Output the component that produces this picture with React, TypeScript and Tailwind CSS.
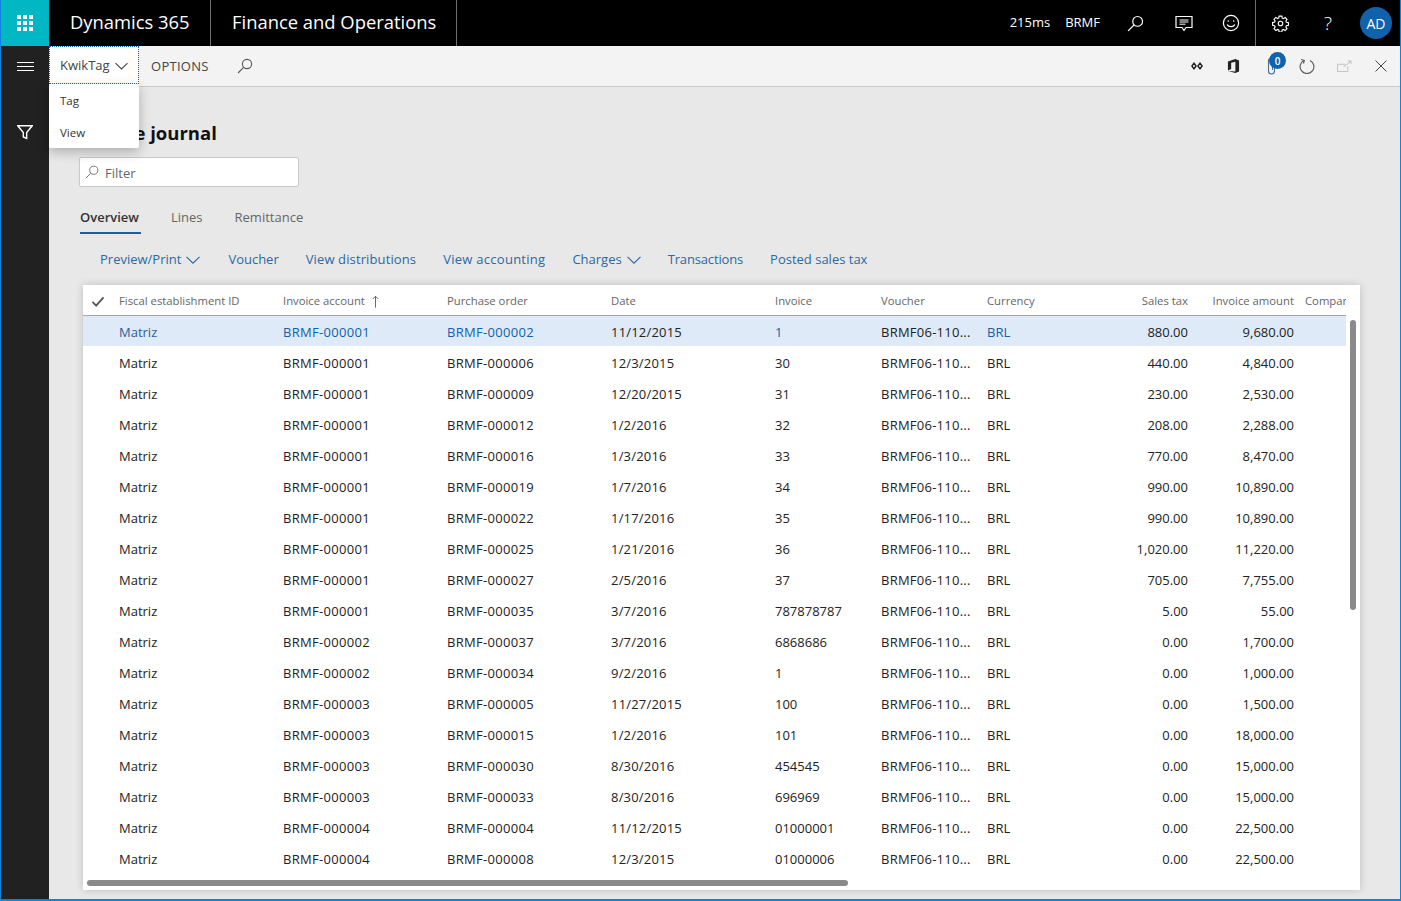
import React from "react";

const FONT = "font-['Open_Sans','Noto_Sans',sans-serif]";

const rows: [string, string, string, string, string, string][] = [
  ["BRMF-000001", "BRMF-000002", "11/12/2015", "1", "880.00", "9,680.00"],
  ["BRMF-000001", "BRMF-000006", "12/3/2015", "30", "440.00", "4,840.00"],
  ["BRMF-000001", "BRMF-000009", "12/20/2015", "31", "230.00", "2,530.00"],
  ["BRMF-000001", "BRMF-000012", "1/2/2016", "32", "208.00", "2,288.00"],
  ["BRMF-000001", "BRMF-000016", "1/3/2016", "33", "770.00", "8,470.00"],
  ["BRMF-000001", "BRMF-000019", "1/7/2016", "34", "990.00", "10,890.00"],
  ["BRMF-000001", "BRMF-000022", "1/17/2016", "35", "990.00", "10,890.00"],
  ["BRMF-000001", "BRMF-000025", "1/21/2016", "36", "1,020.00", "11,220.00"],
  ["BRMF-000001", "BRMF-000027", "2/5/2016", "37", "705.00", "7,755.00"],
  ["BRMF-000001", "BRMF-000035", "3/7/2016", "787878787", "5.00", "55.00"],
  ["BRMF-000002", "BRMF-000037", "3/7/2016", "6868686", "0.00", "1,700.00"],
  ["BRMF-000002", "BRMF-000034", "9/2/2016", "1", "0.00", "1,000.00"],
  ["BRMF-000003", "BRMF-000005", "11/27/2015", "100", "0.00", "1,500.00"],
  ["BRMF-000003", "BRMF-000015", "1/2/2016", "101", "0.00", "18,000.00"],
  ["BRMF-000003", "BRMF-000030", "8/30/2016", "454545", "0.00", "15,000.00"],
  ["BRMF-000003", "BRMF-000033", "8/30/2016", "696969", "0.00", "15,000.00"],
  ["BRMF-000004", "BRMF-000004", "11/12/2015", "01000001", "0.00", "22,500.00"],
  ["BRMF-000004", "BRMF-000008", "12/3/2015", "01000006", "0.00", "22,500.00"],
];

const GRID = "grid grid-cols-[36px_164px_164px_164px_164px_106px_106px_101px_100px_106px_52px]";

function Search({ className, color = "currentColor" }: { className?: string; color?: string }) {
  return (
    <svg viewBox="0 0 16 16" className={className} fill="none" stroke={color} strokeWidth="1.1">
      <circle cx="10" cy="6" r="4.6" />
      <path d="M6.6 9.4 1 15" />
    </svg>
  );
}

function Chevron({ className }: { className?: string }) {
  return (
    <svg viewBox="0 0 14 8" className={className} fill="none" stroke="currentColor" strokeWidth="1.1">
      <path d="M.5.8 7 7.2 13.5.8" />
    </svg>
  );
}

function TopBar() {
  return (
    <header className="flex h-[46px] shrink-0 items-center bg-black text-white">
      <div className="flex h-full w-[48px] items-center justify-center bg-[#00b7c3]">
        <div className="grid grid-cols-3 gap-[1.500px]">
          {Array.from({ length: 9 }).map((_, i) => (
            <span key={i} className="h-[4.500px] w-[4.500px] bg-white" />
          ))}
        </div>
      </div>
      <div className="flex h-full w-[162px] items-center border-r border-[#6f6f6f] pb-[2px] pl-[21px] text-[18.400px] leading-none">
        Dynamics 365
      </div>
      <div className="flex h-full w-[246px] items-center border-r border-[#6f6f6f] pb-[2px] pl-[21px] text-[18.400px] leading-none">
        Finance and Operations
      </div>
      <div className="flex h-full flex-1 items-center justify-end">
        <span className="mr-[15px] text-[13px]">215ms</span>
        <span className="mr-[27px] text-[13px]">BRMF</span>
        <Search className="mr-[31px] h-[17px] w-[17px]" color="#fff" />
        <svg viewBox="0 0 18 18" className="mr-[29px] h-[18px] w-[18px]" fill="none" stroke="#fff" strokeWidth="1.2">
          <path d="M1 2.5h16v11h-6l-2 3-2-3H1z" />
          <path d="M4.5 6h9M4.5 8h9M4.5 10.200h6" strokeWidth="1" />
        </svg>
        <svg viewBox="0 0 18 18" className="mr-[15px] h-[18px] w-[18px]" fill="none" stroke="#fff" strokeWidth="1.2">
          <circle cx="9" cy="9" r="7.6" />
          <circle cx="6.300" cy="7" r=".8" fill="#fff" stroke="none" />
          <circle cx="11.700" cy="7" r=".8" fill="#fff" stroke="none" />
          <path d="M5.200 10.500c1 2.700 6.600 2.700 7.600 0" />
        </svg>
      </div>
      <div className="flex h-full w-[145px] items-center border-l border-[#6f6f6f]">
        <svg viewBox="0 0 18 18" className="ml-[16px] h-[17px] w-[17px]" fill="none" stroke="#fff" strokeWidth="1.2">
          <circle cx="9" cy="9" r="2.400" />
          <path d="M7.600 1.200h2.800l.4 2.100 1.300.6 1.800-1.200 2 2-1.200 1.800.6 1.300 2.100.4v2.800l-2.100.4-.6 1.300 1.200 1.800-2 2-1.800-1.200-1.300.6-.4 2.100H7.600l-.4-2.100-1.300-.6-1.800 1.200-2-2 1.200-1.800-.6-1.300-2.100-.4V8l2.100-.4.600-1.300-1.200-1.800 2-2 1.800 1.200 1.300-.6z" />
        </svg>
        <span className="ml-[34px] w-[10px] text-center text-[19px] font-light leading-none">?</span>
        <span className="ml-[27px] flex h-[32px] w-[32px] items-center justify-center rounded-full bg-[#0f62ab] text-[14px]">
          AD
        </span>
      </div>
    </header>
  );
}

function CommandBar() {
  return (
    <div className="flex h-[41px] shrink-0 items-start border-b border-[#c8c8c8] bg-[#f3f3f3] text-[13px] text-[#444]">
      <div className="flex h-[38px] w-[90px] items-center border border-dotted border-[#0f62ab] bg-white pl-[10px] pt-[2px]">
        <span>KwikTag</span>
        <Chevron className="ml-[5px] mt-[-1px] h-[8px] w-[13px]" />
      </div>
      <span className="ml-[12px] flex h-[40px] items-center pt-[2px] tracking-[.28px]">OPTIONS</span>
      <Search className="ml-[28px] mt-[12px] h-[16px] w-[16px] text-[#555]" />
      <div className="flex h-[40px] flex-1 items-center justify-end">
        <svg viewBox="0 0 14 10" className="mr-[23px] h-[10px] w-[14px]" fill="#222">
          <path d="M4 1 7 5 4 9 1 5zM10 1l3 4-3 4-3-4z" />
          <circle cx="4" cy="5" r="1.100" fill="#f3f3f3" />
          <circle cx="10" cy="5" r="1.100" fill="#f3f3f3" />
        </svg>
        <svg viewBox="0 0 14 16" className="mr-[26px] h-[16px] w-[13px]">
          <path d="M1 3.200 9 .5l4 1.500v12l-4 1.500-8-2.200 8 .6V3.500L4.500 4.500v6.800L1 12.800z" fill="#222" />
        </svg>
        <div className="relative mr-[22px] h-[18px] w-[11px]">
          <svg viewBox="0 0 11 18" className="h-[18px] w-[11px]" fill="none" stroke="#4a6f94" strokeWidth="1.1">
            <path d="M8.500 4v10a3 3 0 0 1-6 0V3.500a2 2 0 0 1 4 0V13" />
          </svg>
          <span className="absolute left-[3px] top-[-5px] flex h-[17px] w-[17px] items-center justify-center rounded-full bg-[#0f62ab] text-[10px] font-semibold leading-none text-white">
            0
          </span>
        </div>
        <svg viewBox="0 0 16 16" className="mr-[22px] h-[16px] w-[16px]" fill="none" stroke="#555" strokeWidth="1.1">
          <path d="M5 2.400a6.900 6.900 0 1 0 6 0" />
          <path d="M2 1.500 5.300 2.300 4.500 5.500" />
        </svg>
        <svg viewBox="0 0 16 14" className="mr-[23px] h-[13px] w-[15px]" fill="none" stroke="#c4c4c4" strokeWidth="1.1">
          <path d="M11.500 7v5.500H.5v-8H9" />
          <path d="M7 7.500 15 1.500M11.500 1H15v3.200" />
        </svg>
        <svg viewBox="0 0 12 12" className="mr-[13px] h-[12px] w-[12px]" fill="none" stroke="#444" strokeWidth="1">
          <path d="M.5.500l11 11M11.500.500l-11 11" />
        </svg>
      </div>
    </div>
  );
}

function Action({ label, chevron, className }: { label: string; chevron?: boolean; className?: string }) {
  return (
    <span className={`flex items-center ${className ?? ""}`}>
      {label}
      {chevron && <Chevron className="ml-[5px] h-[8px] w-[14px]" />}
    </span>
  );
}

function Grid() {
  return (
    <div className="relative ml-[4px] mt-[15px] h-[605px] w-[1277px] bg-white shadow-[0_0_8px_rgba(0,0,0,0.18)]">
      <div className="w-[1263px] overflow-hidden">
        <div className={`${GRID} h-[31px] items-center border-b border-[#a5a5a5] pt-[2px] text-[11.300px] text-[#666]`}>
          <svg viewBox="0 0 14 12" className="ml-[8px] h-[11px] w-[14px]" fill="none" stroke="#555" strokeWidth="2">
            <path d="M1 6.500 5 10.500 13 1.500" />
          </svg>
          <span>Fiscal establishment ID</span>
          <span className="flex items-center">
            Invoice account
            <svg viewBox="0 0 8 14" className="ml-[7px] h-[13px] w-[7px]" fill="none" stroke="#5d4a6e" strokeWidth="1">
              <path d="M4 14V1M1 4l3-3 3 3" />
            </svg>
          </span>
          <span>Purchase order</span>
          <span>Date</span>
          <span>Invoice</span>
          <span>Voucher</span>
          <span>Currency</span>
          <span className="text-right">Sales tax</span>
          <span className="text-right">Invoice amount</span>
          <span className="ml-[11px] overflow-hidden whitespace-nowrap">Company</span>
        </div>
        {rows.map((r, i) => {
          const first = i === 0;
          const link = first ? "text-[#0f62ab]" : "";
          return (
            <div
              key={i}
              className={`${GRID} items-center pt-[4px] text-[13px] text-[#222] ${first ? "h-[30px] bg-[#deeaf7]" : "h-[31px]"}`}
            >
              <span />
              <span className={first ? "text-[#2f5f94]" : ""}>Matriz</span>
              <span className={`tracking-[.3px] ${link}`}>{r[0]}</span>
              <span className={`tracking-[.3px] ${link}`}>{r[1]}</span>
              <span className="tracking-[.2px]">{r[2]}</span>
              <span className={link}>{r[3]}</span>
              <span className="tracking-[.25px]">BRMF06-110...</span>
              <span className={link}>BRL</span>
              <span className="text-right">{r[4]}</span>
              <span className="text-right">{r[5]}</span>
              <span />
            </div>
          );
        })}
      </div>
      <div className="absolute left-[1267px] top-[35px] h-[290px] w-[6px] rounded-[3px] bg-[#8a8a8a]" />
      <div className="absolute left-[4px] top-[595px] h-[6px] w-[761px] rounded-[3px] bg-[#8a8a8a]" />
    </div>
  );
}

export default function App() {
  return (
    <div className={`${FONT} relative flex h-[901px] w-[1401px] flex-col overflow-hidden border-x border-b-2 border-[#0f84dc] bg-[#e8e8e8]`}>
      <TopBar />
      <div className="flex min-h-0 flex-1">
        <aside className="flex w-[48px] shrink-0 flex-col items-center bg-[#212121] pt-[16px]">
          <div className="flex flex-col gap-[3px]">
            <span className="h-[1px] w-[17px] bg-white" />
            <span className="h-[1px] w-[17px] bg-white" />
            <span className="h-[1px] w-[17px] bg-white" />
          </div>
          <svg viewBox="0 0 16 15" className="mt-[54px] h-[15px] w-[16px]" fill="none" stroke="#fff" strokeWidth="1.400">
            <path d="M.8.800h14.400L9.700 7.500v6L6.300 12V7.500z" />
          </svg>
        </aside>
        <main className="flex min-w-0 flex-1 flex-col">
          <CommandBar />
          <div className="pl-[30px]">
            <h1 className="mt-[31px] h-[30px] text-[18.500px] font-bold leading-[30px] text-[#111]">Invoice journal</h1>
            <div className="mt-[9px] flex h-[30px] w-[220px] items-center rounded-[2px] border border-[#c8c8c8] bg-white pl-[5px] pt-[3px] text-[13px] text-[#666]">
              <Search className="mt-[-3px] h-[14px] w-[14px] text-[#777]" />
              <span className="ml-[6px]">Filter</span>
            </div>
            <div className="ml-[1px] mt-[21px] flex text-[13px] text-[#666]">
              <span className="h-[26px] w-[61px] border-b-2 border-[#0f62ab] font-semibold text-[#333]">Overview</span>
              <span className="ml-[30px]">Lines</span>
              <span className="ml-[32px]">Remittance</span>
            </div>
            <div className="ml-[21px] mt-[16px] flex h-[20px] items-center text-[13px] text-[#2a69a5]">
              <Action label="Preview/Print" chevron />
              <Action label="Voucher" className="ml-[28px]" />
              <Action label="View distributions" className="ml-[27px] tracking-[.12px]" />
              <Action label="View accounting" className="ml-[27px] tracking-[.27px]" />
              <Action label="Charges" chevron className="ml-[27px]" />
              <Action label="Transactions" className="ml-[27px] tracking-[-.15px]" />
              <Action label="Posted sales tax" className="ml-[27px]" />
            </div>
            <Grid />
          </div>
        </main>
      </div>
      <div className="absolute left-[48px] top-[84px] flex h-[64px] w-[90px] flex-col rounded-b-[2px] bg-white pl-[11px] text-[11.500px] text-[#333] shadow-[0_4px_12px_rgba(0,0,0,0.25)]">
        <span className="mt-[8px] h-[32px]">Tag</span>
        <span>View</span>
      </div>
    </div>
  );
}
